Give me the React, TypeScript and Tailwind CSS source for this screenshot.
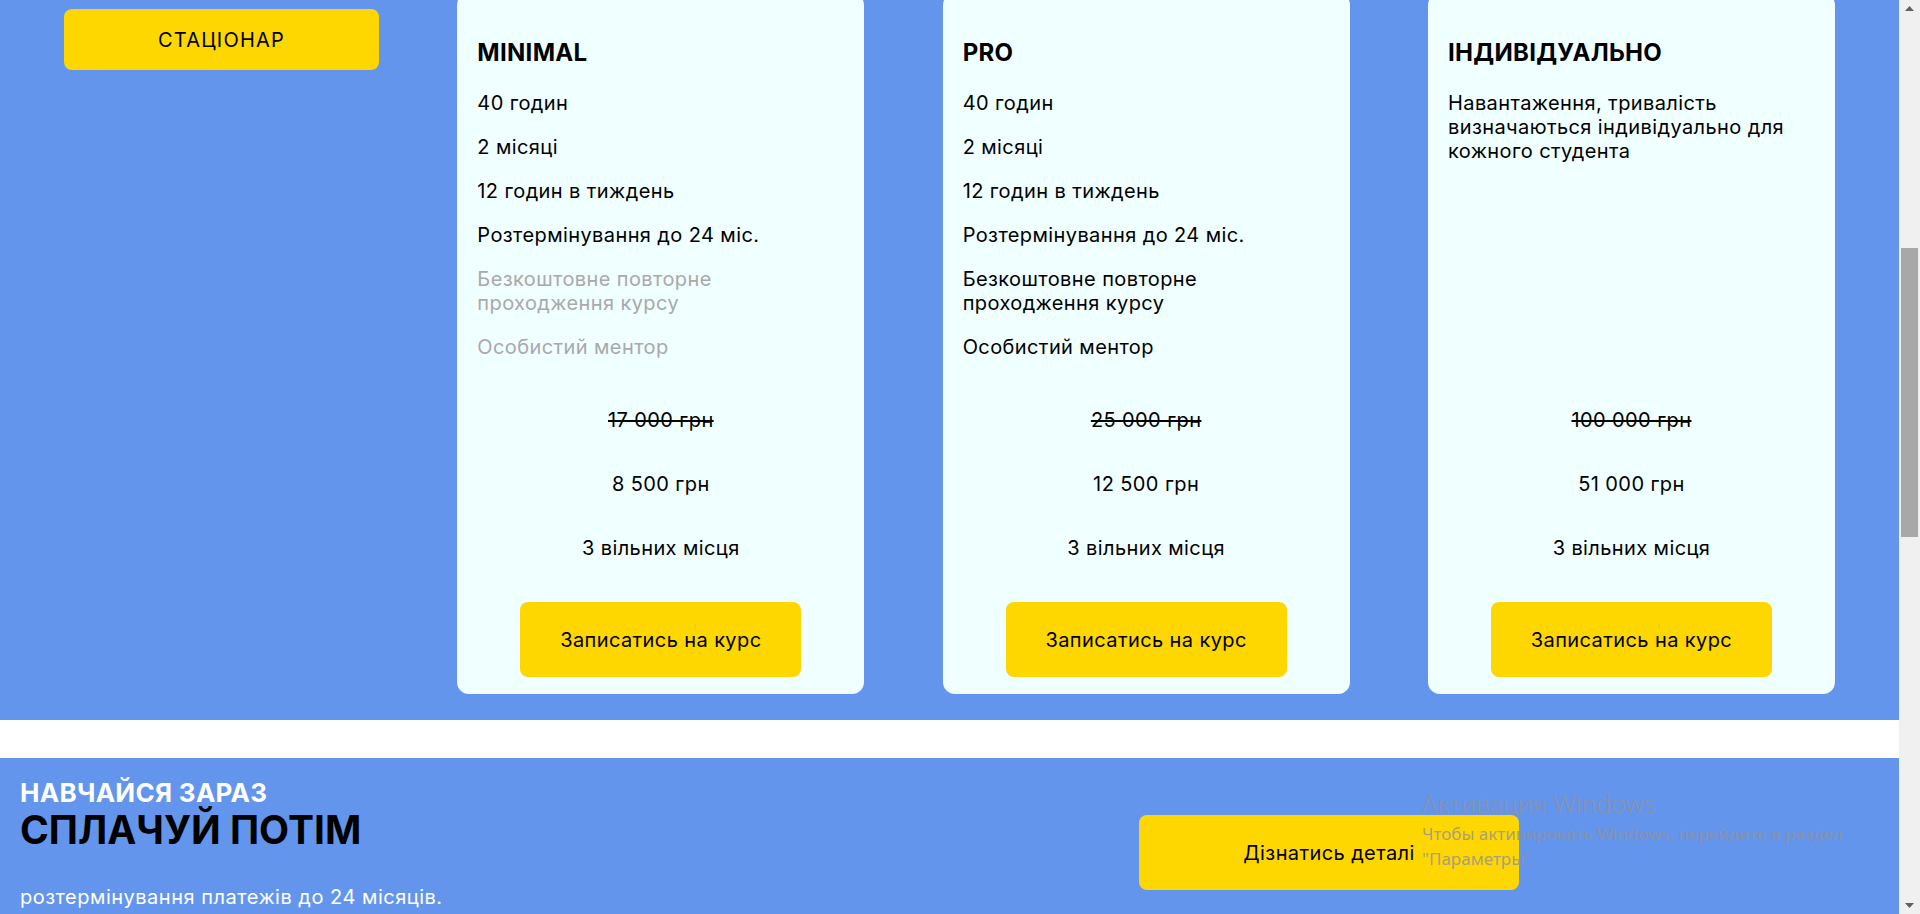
type Plan = {
  title: string;
  items: string[];
  muted?: number[];
  old: string;
  price: string;
};

const plans: Plan[] = [
  {
    title: "MINIMAL",
    items: [
      "40 годин",
      "2 місяці",
      "12 годин в тиждень",
      "Розтермінування до 24 міс.",
      "Безкоштовне повторне проходження курсу",
      "Особистий ментор",
    ],
    muted: [4, 5],
    old: "17 000 грн",
    price: "8 500 грн",
  },
  {
    title: "PRO",
    items: [
      "40 годин",
      "2 місяці",
      "12 годин в тиждень",
      "Розтермінування до 24 міс.",
      "Безкоштовне повторне проходження курсу",
      "Особистий ментор",
    ],
    old: "25 000 грн",
    price: "12 500 грн",
  },
  {
    title: "ІНДИВІДУАЛЬНО",
    items: ["Навантаження, тривалість визначаються індивідуально для кожного студента"],
    old: "100 000 грн",
    price: "51 000 грн",
  },
];

const PlanCard = ({ plan }: { plan: Plan }) => {
  return (
    <div className="-mt-[7px] flex h-[701px] w-[407px] flex-col rounded-[12px] bg-[#f0ffff] px-5 pb-[17px] pt-[46px] text-black">
      <h3 className="text-[24px] font-bold leading-[28px] tracking-[0.3px]">{plan.title}</h3>
      <ul className="mt-[24px] flex flex-col gap-5 text-[20px] leading-6 tracking-[0.4px]">
        {plan.items.map((item, i) => (
          <li key={item} className={plan.muted?.includes(i) ? "text-[#a9a9a9]" : ""}>
            {item}
          </li>
        ))}
      </ul>
      <div className="mt-auto flex flex-col items-center gap-10 text-[20px] leading-6 tracking-[0.4px]">
        <span className="line-through">{plan.old}</span>
        <span>{plan.price}</span>
        <span>3 вільних місця</span>
      </div>
      <button className="mx-auto mt-[42px] h-[75px] w-[281px] rounded-lg bg-[#ffd700] text-[20px] tracking-[0.4px]">
        Записатись на курс
      </button>
    </div>
  );
};

const Scrollbar = () => (
  <div className="flex w-[21px] flex-col items-center bg-[#f0f0f0]">
    <div className="flex h-[17px] items-center">
      <svg width="9" height="5" viewBox="0 0 9 5">
        <path d="M0 5 L4.5 0 L9 5 Z" fill="#606060" />
      </svg>
    </div>
    <div className="mt-[231px] h-[289px] w-[17px] bg-[#a8a8a8]" />
    <div className="flex-1" />
    <div className="flex h-[17px] items-center">
      <svg width="9" height="5" viewBox="0 0 9 5">
        <path d="M0 0 L9 0 L4.5 5 Z" fill="#606060" />
      </svg>
    </div>
  </div>
);

export default function App() {
  return (
    <div className="relative flex h-[914px] w-full overflow-hidden font-['Inter','Noto_Sans',sans-serif]">
      <main className="flex flex-1 flex-col">
        <section className="flex h-[720px] items-start justify-between bg-[#6495ed] px-16">
          <button className="mt-[9px] h-[61px] w-[315px] rounded-lg bg-[#ffd700] text-[20px] uppercase tracking-[1.2px] text-black">
            Стаціонар
          </button>
          {plans.map((plan) => (
            <PlanCard key={plan.title} plan={plan} />
          ))}
        </section>

        <div className="h-[38px] bg-white" />

        <section className="flex flex-1 bg-[#6495ed] px-5">
          <div className="flex w-[1119px] flex-col pt-[19px]">
            <h4 className="text-[26px] font-bold leading-[31px] tracking-[0.3px] text-white">НАВЧАЙСЯ ЗАРАЗ</h4>
            <h2 className="text-[39px] font-bold leading-[44px] text-black">СПЛАЧУЙ ПОТІМ</h2>
            <p className="mt-[33px] text-[20px] leading-6 tracking-[0.5px] text-white">
              розтермінування платежів до 24 місяців.
            </p>
          </div>
          <button className="mt-[57px] h-[75px] w-[380px] rounded-lg bg-[#ffd700] text-[20px] tracking-[0.4px] text-black">
            Дізнатись деталі
          </button>
        </section>
      </main>

      <Scrollbar />

      <div className="pointer-events-none absolute left-[1422px] top-[785px] font-['Noto_Sans',sans-serif] text-[rgba(145,145,150,0.8)]">
        <div className="text-[25px] font-light leading-[36px]">Активация Windows</div>
        <div className="text-[17px] leading-[25px]">
          Чтобы активировать Windows, перейдите в раздел
          <br />
          "Параметры".
        </div>
      </div>
    </div>
  );
}
